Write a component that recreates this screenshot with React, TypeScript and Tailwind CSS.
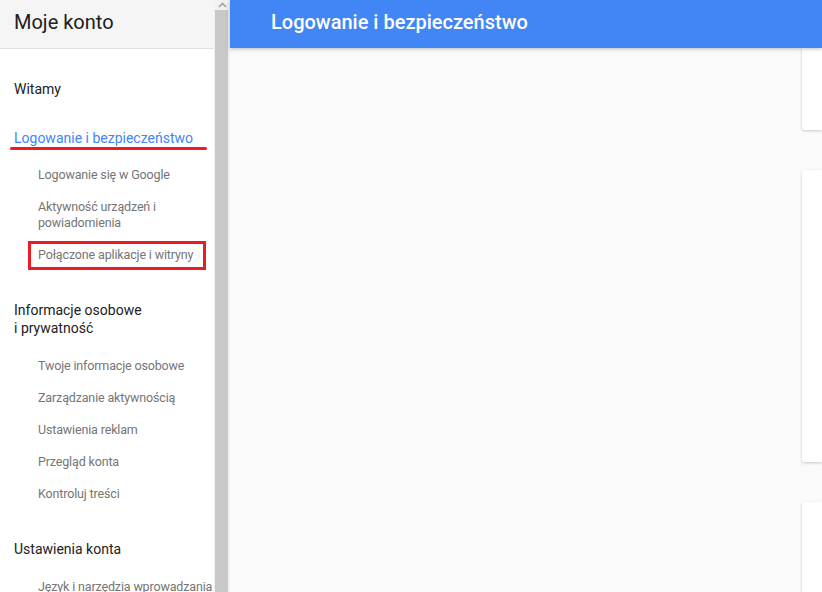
import React from "react";

const Sub = ({ children }: { children: React.ReactNode }) => (
  <div className="py-[8px] pl-[38px] pr-1 text-[12.5px] leading-[16px] tracking-[-0.15px] text-[#757575] whitespace-nowrap">
    {children}
  </div>
);

export default function App() {
  return (
    <div
      className="flex h-[592px] w-[822px] overflow-hidden bg-[#fafafa]"
      style={{ fontFamily: "Roboto, 'Noto Sans', sans-serif" }}
    >
      {/* Sidebar */}
      <div className="flex h-full w-[214px] shrink-0 flex-col overflow-hidden bg-white">
        <div className="flex h-[49px] shrink-0 items-center border-b border-[#e0e0e0] bg-[#f5f5f5] pb-[4px] pl-[14px] text-[20px] text-[#212121]">
          Moje konto
        </div>
        <div className="pl-[14px] pt-[30px] text-[14px] leading-[20px] text-[#212121]">Witamy</div>
        <div className="relative mt-[29px] pl-[14px] text-[14px] leading-[20px] text-[#4285f4] whitespace-nowrap">
          Logowanie i bezpieczeństwo
          <div className="absolute left-[10px] top-[19px] h-[3px] w-[197px] rounded-full bg-[#ed1c24]" />
        </div>
        <div className="mt-[11px]">
          <Sub>Logowanie się w Google</Sub>
          <Sub>
            Aktywność urządzeń i
            <br />
            powiadomienia
          </Sub>
          <div className="relative">
            <Sub>Połączone aplikacje i witryny</Sub>
            <div className="absolute left-[28px] top-[2px] h-[29px] w-[178px] border-[3px] border-[#ed1c24]" />
          </div>
        </div>
        <div className="mt-[30px] pl-[14px] text-[14px] leading-[18px] text-[#212121]">
          Informacje osobowe
          <br />i prywatność
        </div>
        <div className="mt-[13px]">
          <Sub>Twoje informacje osobowe</Sub>
          <Sub>Zarządzanie aktywnością</Sub>
          <Sub>Ustawienia reklam</Sub>
          <Sub>Przegląd konta</Sub>
          <Sub>Kontroluj treści</Sub>
        </div>
        <div className="mt-[29px] pl-[14px] text-[14px] leading-[20px] text-[#212121]">Ustawienia konta</div>
        <div className="mt-[12px]">
          <Sub>Język i narzędzia wprowadzania</Sub>
        </div>
      </div>

      {/* Scrollbar */}
      <div className="flex h-full w-[16px] shrink-0 flex-col bg-[#f1f1f1]">
        <div className="flex h-[10px] shrink-0 items-center justify-center">
          <svg width="9" height="6" viewBox="0 0 9 6">
            <path d="M1 5 L4.5 1.5 L8 5" stroke="#a3a3a3" strokeWidth="1.6" fill="none" />
          </svg>
        </div>
        <div className="ml-[1px] w-[13px] flex-1 bg-[#c8c8c8]" />
      </div>

      {/* Main */}
      <div className="relative flex h-full flex-1 flex-col">
        <div className="relative z-10 flex h-[48px] shrink-0 items-center bg-[#4285f4] pb-[5px] pl-[41px] text-[20px] font-medium text-white shadow-[0_1px_4px_rgba(0,0,0,0.25)]">
          Logowanie i bezpieczeństwo
        </div>
        <div className="flex flex-1 flex-col items-end overflow-hidden">
          <div className="h-[82px] w-[20px] shrink-0 rounded-bl-[3px] bg-white shadow-[0_1px_3px_rgba(0,0,0,0.2)]" />
          <div className="mt-[40px] h-[292px] w-[20px] shrink-0 rounded-l-[3px] bg-white shadow-[0_1px_3px_rgba(0,0,0,0.2)]" />
          <div className="mt-[40px] h-[120px] w-[20px] shrink-0 rounded-tl-[3px] bg-white shadow-[0_1px_3px_rgba(0,0,0,0.2)]" />
        </div>
      </div>
    </div>
  );
}
